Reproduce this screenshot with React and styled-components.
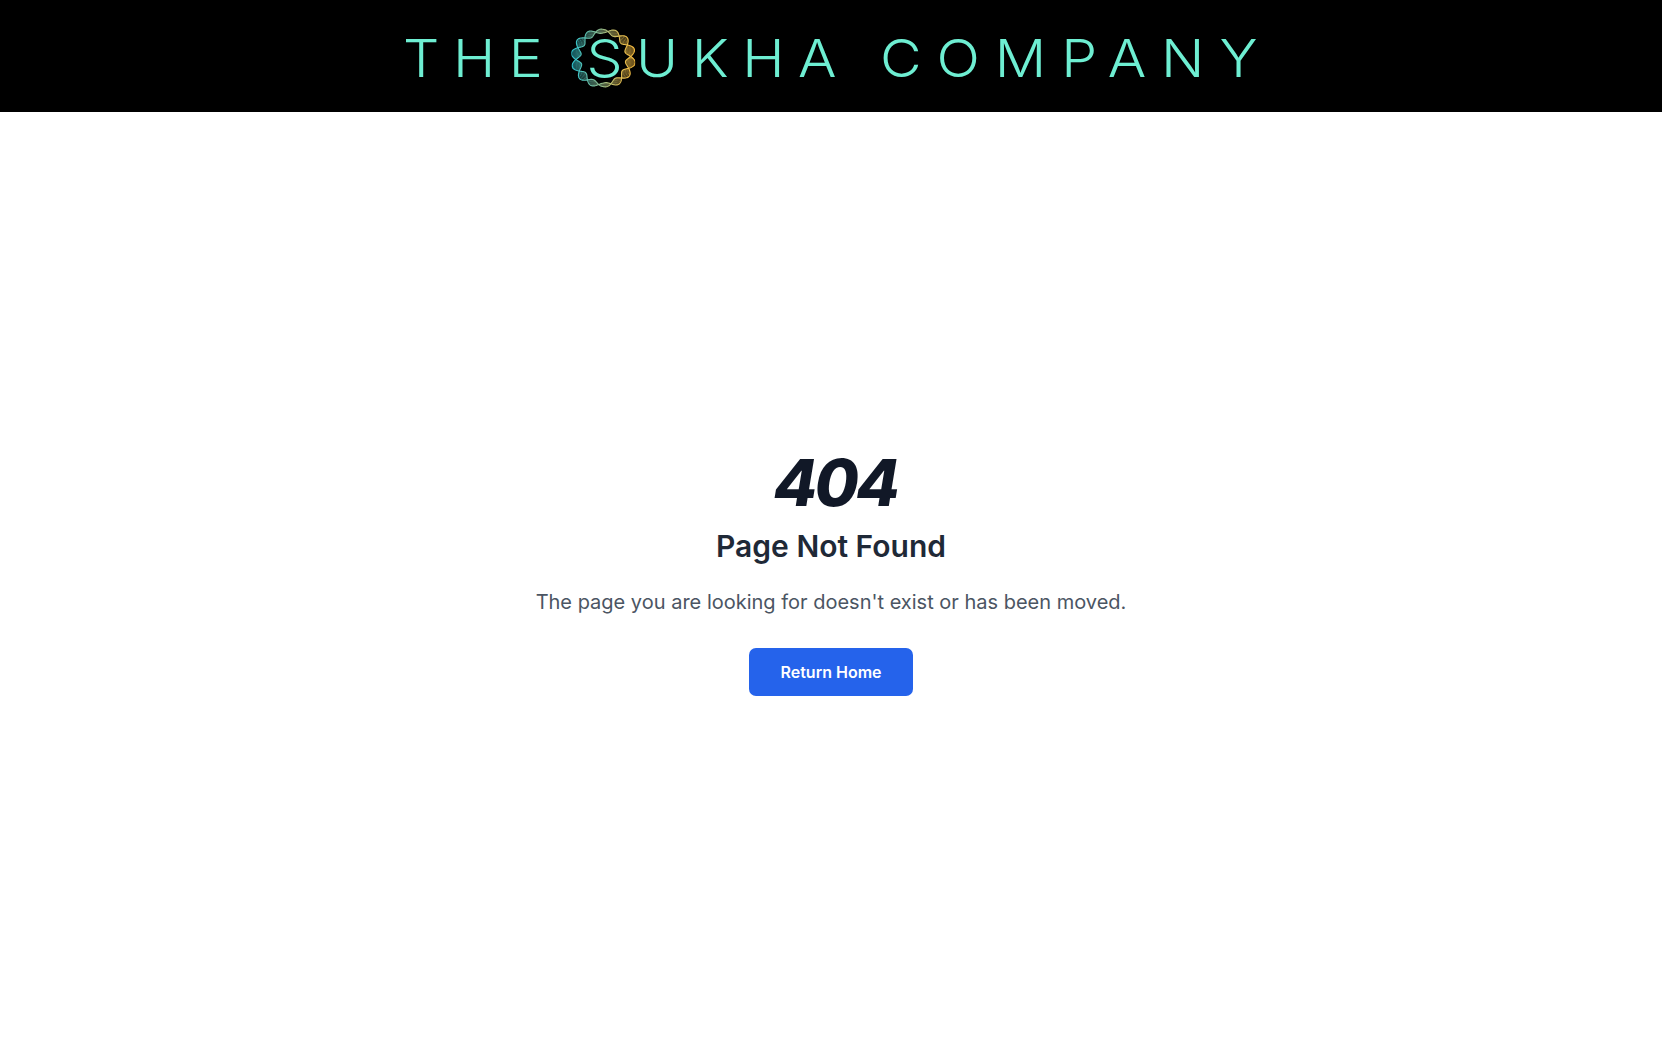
import React from "react"
import styled, { createGlobalStyle } from "styled-components"

const GlobalStyle = createGlobalStyle`
  html, body {
    margin: 0;
    padding: 0;
    background: #fff;
    font-family: Inter, "Liberation Sans", sans-serif;
  }
`

const Page = styled.div`
  display: flex;
  flex-direction: column;
  min-height: 1054px;
`

const Header = styled.header`
  display: flex;
  align-items: center;
  justify-content: center;
  height: 112px;
  background: #000;
`

const Brand = styled.div`
  padding: 6px 0 0 12px;
  color: #6eeed2;
  font-family: Inter, sans-serif;
  font-size: 52px;
  font-weight: 300;
  word-spacing: 12.6px;
  line-height: 1;
  white-space: nowrap;
  transform: scaleX(1.1);
`

const Word = styled.span`
  letter-spacing: ${props => props.$spacing}px;
`

const RingLetter = styled.span`
  position: relative;
  display: inline-block;
`

const RingIcon = styled.svg`
  position: absolute;
  left: -14px;
  top: -6px;
  width: 58px;
  height: 62px;
`

const Main = styled.main`
  flex: 1;
  display: flex;
  flex-direction: column;
  align-items: center;
  justify-content: center;
  padding-bottom: 20px;
  text-align: center;
`

const Code = styled.h1`
  margin: 0 0 13px;
  padding: 1px 0 0 8px;
  color: #111827;
  font-size: 64px;
  font-weight: 800;
  font-style: italic;
  letter-spacing: -3px;
  line-height: 1;
`

const Title = styled.h2`
  margin: 0 0 24px;
  color: #1f2937;
  font-size: 30px;
  font-weight: 600;
  line-height: 36px;
`

const Message = styled.p`
  margin: 0 0 32px;
  color: #4b5563;
  font-size: 20px;
  line-height: 28px;
`

const HomeButton = styled.a`
  padding: 12px 31px;
  border-radius: 7px;
  background: #2563eb;
  color: #fff;
  font-size: 16px;
  font-weight: 600;
  line-height: 24px;
  text-decoration: none;
`

// two strands wound around a circle: fat lobes left and right, thin bands top and bottom
const helix = () => {
  const strandA = []
  const strandB = []
  let rungs = ""
  const twists = 7
  for (let i = 0; i <= 360; i++) {
    const t = (i / 360) * Math.PI * 2
    const wave = Math.sin(t * twists + 0.4) * (1.8 + 3.2 * Math.abs(Math.cos(t)))
    const rx = 27.5
    const ry = 26
    const ax = 32 + (rx + wave) * Math.cos(t)
    const ay = 30 + (ry + wave) * Math.sin(t)
    const bx = 32 + (rx - wave) * Math.cos(t)
    const by = 30 + (ry - wave) * Math.sin(t)
    strandA.push(`${ax.toFixed(2)} ${ay.toFixed(2)}`)
    strandB.push(`${bx.toFixed(2)} ${by.toFixed(2)}`)
    if (i % 2 === 0) rungs += `M${ax.toFixed(2)} ${ay.toFixed(2)}L${bx.toFixed(2)} ${by.toFixed(2)}`
  }
  return {
    strands: `M${strandA.join("L")}M${strandB.join("L")}`,
    rungs,
  }
}

const Ring = () => {
  const { strands, rungs } = helix()
  return (
    <RingIcon viewBox="0 0 64 60" fill="none" preserveAspectRatio="none">
      <defs>
        <linearGradient id="ringColor" x1="0" y1="0" x2="1" y2="0">
          <stop offset="0" stopColor="#2cc6d4" />
          <stop offset="0.45" stopColor="#8cba8e" />
          <stop offset="0.75" stopColor="#dcbc55" />
          <stop offset="1" stopColor="#f9bb3c" />
        </linearGradient>
      </defs>
      <path d={rungs} stroke="url(#ringColor)" strokeWidth="0.55" />
      <path d={strands} stroke="url(#ringColor)" strokeWidth="1.1" />
    </RingIcon>
  )
}

const App = () => {
  return (
    <Page>
      <GlobalStyle />
      <Header>
        <Brand>
          <Word $spacing={12.3}>THE</Word>{" "}
          <Word $spacing={12.3}>
            <RingLetter>
              <Ring />S
            </RingLetter>
            UKHA
          </Word>{" "}
          <Word $spacing={13.5}>COMPANY</Word>
        </Brand>
      </Header>

      <Main>
        <Code>404</Code>
        <Title>Page Not Found</Title>
        <Message>The page you are looking for doesn't exist or has been moved.</Message>
        <HomeButton href="#">Return Home</HomeButton>
      </Main>
    </Page>
  )
}

export default App
